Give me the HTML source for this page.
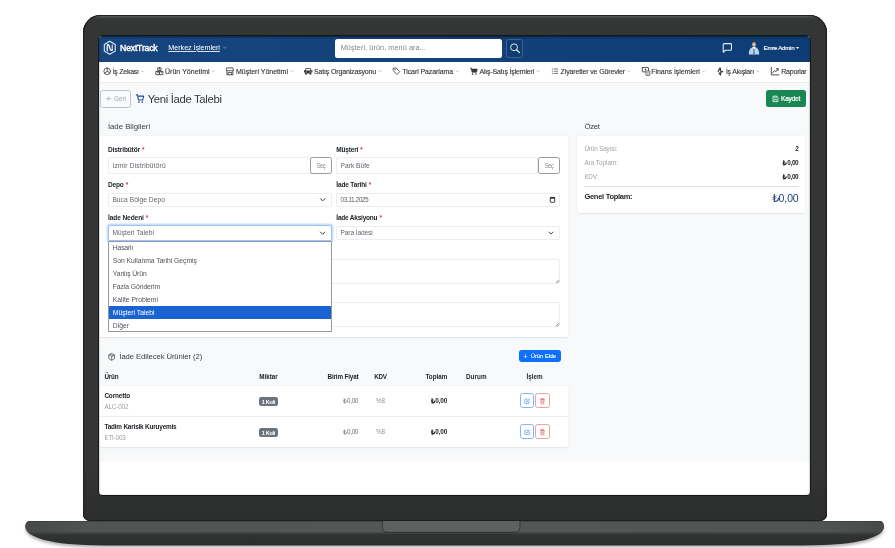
<!DOCTYPE html>
<html><head><meta charset="utf-8">
<style>
html,body{margin:0;padding:0}
body{width:895px;height:548px;position:relative;overflow:hidden;background:#fff;font-family:"Liberation Sans",sans-serif}
.a{position:absolute;box-sizing:border-box}
.t{position:absolute;white-space:pre;font-family:"Liberation Sans",sans-serif}
svg{position:absolute;overflow:visible}
</style></head><body>

<!-- laptop lid -->
<div class="a" id="lid" style="left:83px;top:15px;width:744px;height:506px;background:linear-gradient(#1c1d1d 0,#5c5e5d .9px,#4a4c4b 2px,#393b3a 3.5px,#343636 6px,#343636 90%,#2f3131 95%,#2c2e2e 100%);border-radius:17.5px 17.5px 7px 7px;box-shadow:inset 0 0 0 .9px #1f2020, inset 2.5px 0 1.5px -1px #2b2c2c, inset -2.5px 0 1.5px -1px #2b2c2c"></div>
<!-- base -->
<svg class="a" style="left:0;top:500px" width="895" height="48" viewBox="0 500 895 48">
<defs>
<linearGradient id="bg1" x1="0" y1="0" x2="0" y2="1"><stop offset="0" stop-color="#3c3e3d"/><stop offset="1" stop-color="#2b2c2c"/></linearGradient>
<linearGradient id="bg2" x1="0" y1="0" x2="1" y2="0"><stop offset="0" stop-color="#474948"/><stop offset=".08" stop-color="#525453"/><stop offset=".5" stop-color="#555756"/><stop offset=".92" stop-color="#525453"/><stop offset="1" stop-color="#474948"/></linearGradient>
<linearGradient id="sh" x1="0" y1="0" x2="0" y2="1"><stop offset="0" stop-color="#000" stop-opacity="0"/><stop offset="1" stop-color="#000" stop-opacity=".14"/></linearGradient>
<filter id="bl" x="-5%" y="-50%" width="110%" height="200%"><feGaussianBlur stdDeviation="1.4"/></filter>
<clipPath id="bc"><path id="bp" d="M25.4 526.5Q25.4 520.9 30 520.9H879.3Q883.9 520.9 883.9 526.5C883.5 537 861 545.4 804 545.4H105C48 545.4 25.8 537 25.4 526.5Z"/></clipPath>
</defs>
<path d="M25.4 526.5Q25.4 520.9 30 520.9H879.3Q883.9 520.9 883.9 526.5C883.5 537 861 545.4 804 545.4H105C48 545.4 25.8 537 25.4 526.5Z" transform="translate(0 2.2)" fill="#000" opacity=".3" filter="url(#bl)"/>
<path d="M25.4 526.5Q25.4 520.9 30 520.9H879.3Q883.9 520.9 883.9 526.5C883.5 537 861 545.4 804 545.4H105C48 545.4 25.8 537 25.4 526.5Z" fill="url(#bg1)"/>
<g clip-path="url(#bc)">
<rect x="20" y="520" width="870" height="12.6" fill="url(#bg2)"/>
<rect x="20" y="532.6" width="870" height="1.2" fill="#434544"/>
<rect x="20" y="520.4" width="870" height="1" fill="#2f3130"/>
<path d="M382.3 520.5H520V527.3Q520 532.3 515 532.3H387.3Q382.3 532.3 382.3 527.3Z" fill="#5f6160" stroke="#2f3131" stroke-width=".9"/>
</g>
</svg>
<!-- screen -->
<div class="a" id="screen" style="left:99px;top:36px;width:710.5px;height:458.5px;background:#fff;border-radius:3.5px;overflow:hidden;box-shadow:0 0 0 .9px #151616">
  <div class="a" style="left:1px;top:0;width:100%;height:425.7px;background:#f8f9fb"></div>
  <div class="a" style="left:0;top:26px;width:100%;height:20.3px;background:#fff;box-shadow:0 .5px 1px rgba(0,0,0,.05)"></div>
  <div class="a" style="left:0;top:0;width:100%;height:25.8px;background:linear-gradient(90deg,#17457d,#0e3c74);box-shadow:0 .4px 1px rgba(10,40,90,.18)"></div>
  <div class="a" style="left:0;top:0;width:100%;height:100%;border-radius:3.5px;box-shadow:inset 0 1.2px 1.8px rgba(0,0,0,.42), inset 0 0 1.2px rgba(0,0,0,.35)"></div>
</div>

<!-- header items -->
<div class="a" style="left:334.9px;top:38.7px;width:167.1px;height:18.9px;background:#fff;border-radius:2.5px"></div>
<div class="a" style="left:506.4px;top:38.7px;width:16.8px;height:18.9px;background:rgba(0,0,0,.06);border:.7px solid #3f6398;border-radius:2.5px"></div>
<!-- avatar -->



<!-- page head -->
<div class="a" style="left:100px;top:90.2px;width:31.4px;height:17.6px;border:.8px solid #c0c4c8;border-radius:2.6px;background:#f9fafb"></div>
<div class="a" style="left:766.4px;top:90.2px;width:40px;height:17.3px;background:#198754;border-radius:2.5px"></div>

<!-- card 1 -->
<div class="a" style="left:100px;top:136px;width:468px;height:201px;background:#fff;border-radius:0 0 2.5px 2.5px;box-shadow:0 .8px 1.5px rgba(0,0,0,.09)"></div>
<!-- inputs -->
<div class="a" style="left:107.8px;top:157.4px;width:203px;height:16.8px;border:.6px solid #ebedf0;border-radius:2px 0 0 2px;background:#fff"></div>
<div class="a" style="left:310.1px;top:157.4px;width:22.2px;height:16.8px;border:.8px solid #979ca1;border-radius:2.4px;background:#fff"></div>
<div class="a" style="left:336.1px;top:157.4px;width:202.4px;height:16.8px;border:.6px solid #ebedf0;border-radius:2px 0 0 2px;background:#fff"></div>
<div class="a" style="left:538px;top:157.4px;width:22.4px;height:16.8px;border:.8px solid #979ca1;border-radius:2.4px;background:#fff"></div>
<div class="a" style="left:107.8px;top:192.6px;width:224.4px;height:14.6px;border:.6px solid #ebedf0;border-radius:2px;background:#fff"></div>
<div class="a" style="left:336.1px;top:192.6px;width:224.3px;height:14.6px;border:.6px solid #ebedf0;border-radius:2px;background:#fff"></div>
<div class="a" style="left:336.1px;top:225.5px;width:224.3px;height:14.8px;border:.6px solid #ebedf0;border-radius:2px;background:#fff"></div>
<div class="a" style="left:108px;top:258.7px;width:452.4px;height:25.2px;border:.6px solid #ebedf0;border-radius:2px;background:#fff"></div>
<div class="a" style="left:108px;top:301.5px;width:452.4px;height:25.7px;border:.6px solid #ebedf0;border-radius:2px;background:#fff"></div>
<!-- focused select -->
<div class="a" style="left:107.8px;top:225.3px;width:224.6px;height:15.3px;border:.8px solid #9cc3fd;border-radius:2px;background:#fff;box-shadow:0 0 0 1.5px rgba(13,110,253,.22)"></div>
<!-- select chevrons -->
<!-- calendar icon -->
<!-- dropdown -->
<div class="a" style="left:108.4px;top:240.6px;width:223.8px;height:91.6px;background:#fff;border:.8px solid #969a9f"></div>
<div class="a" style="left:109.1px;top:306.1px;width:222.4px;height:12.5px;background:#1a63d3"></div>

<!-- card 2 -->
<div class="a" style="left:100px;top:385.5px;width:468px;height:61.6px;background:#fff;border-radius:0 0 2.5px 2.5px;box-shadow:0 .8px 1.5px rgba(0,0,0,.09)"></div>
<div class="a" style="left:100px;top:416.1px;width:468px;height:.6px;background:#eceef0"></div>
<div class="a" style="left:518.8px;top:350px;width:41.8px;height:12.4px;background:#0f70fb;border-radius:2.4px"></div>
<!-- badges -->
<div class="a" style="left:259px;top:397.4px;width:19.2px;height:9px;background:#6c757d;border-radius:2.2px"></div>
<div class="a" style="left:259px;top:428.3px;width:19.2px;height:9px;background:#6c757d;border-radius:2.2px"></div>
<!-- action buttons -->
<div class="a" style="left:519.7px;top:393.4px;width:14.4px;height:14.5px;border:.8px solid #86b4fb;border-radius:2.6px;background:#fff"></div>
<div class="a" style="left:535.3px;top:393.4px;width:14.4px;height:14.5px;border:.8px solid #eea0a8;border-radius:2.6px;background:#fff"></div>
<div class="a" style="left:519.7px;top:424.3px;width:14.4px;height:14.5px;border:.8px solid #86b4fb;border-radius:2.6px;background:#fff"></div>
<div class="a" style="left:535.3px;top:424.3px;width:14.4px;height:14.5px;border:.8px solid #eea0a8;border-radius:2.6px;background:#fff"></div>

<!-- ozet card -->
<div class="a" style="left:576.5px;top:135.8px;width:228.6px;height:77px;background:#fff;border-radius:0 0 2.5px 2.5px;box-shadow:0 .8px 1.5px rgba(0,0,0,.09)"></div>
<div class="a" style="left:584.2px;top:185.9px;width:214.6px;height:.6px;background:#dcdfe3"></div>

<!-- lira signs -->
<svg class="a" style="left:0;top:0" width="895" height="548" viewBox="0 0 895 548">
<g transform="translate(103.60 40.60) scale(0.5125 0.5143)"><path d="M12 1.4L22.6 7.5V20.5L12 26.6L1.4 20.5V7.5Z" fill="none" stroke="#e6eefb" stroke-width="2.1" stroke-linejoin="round"/><path d="M16.9 8.6V18.4" fill="none" stroke="#c3cad8" stroke-width="2.6" stroke-linecap="round"/><path d="M7.1 19.8V10.4C7.1 7.6 9.6 7.2 10.6 9.4L13.2 17.6C14 19.8 16.9 19.6 16.9 17.4" fill="none" stroke="#fff" stroke-width="2.5" stroke-linecap="round"/></g>
<g transform="translate(223.10 46.60) scale(0.5833 0.5833)" color="#9fb1cc"><path d="M0.7 0.7L3 3L5.3 0.7" fill="none" stroke="currentColor" stroke-width="1.0" stroke-linecap="round" stroke-linejoin="round"/></g>
<g transform="translate(509.80 43.00) scale(0.6562 0.6562)"><circle cx="6.5" cy="6.5" r="5.2" fill="none" stroke="#fff" stroke-width="1.35"/><path d="M10.4 10.4L14.8 14.8" stroke="#fff" stroke-width="1.7" stroke-linecap="round"/></g>
<g transform="translate(722.60 43.00) scale(0.6333 0.6250)"><path d="M2.4 1H12.6C13.4 1 14 1.6 14 2.4V10.2C14 11 13.4 11.6 12.6 11.6H4.6L1 14.8V2.4C1 1.6 1.6 1 2.4 1Z" fill="none" stroke="#e6edf7" stroke-width="1.7" stroke-linejoin="round"/></g>
<g transform="translate(748.30 41.00) scale(0.4957 0.4963)"><path d="M1 27C1 18 4 12.6 11.5 12.6C19 12.6 22 18 22 27Z" fill="#b9d3ee"/><path d="M8.3 12.9L11.5 16.5L14.7 12.9L13.6 11H9.4Z" fill="#f3f6fa"/><path d="M10.8 15.6H12.2L12.6 26H10.4Z" fill="#3a4654"/><ellipse cx="11.5" cy="6.4" rx="3.7" ry="4.6" fill="#e2b99a"/><path d="M7.7 5.4C7.6 1.6 9.6 0.6 11.6 0.6C13.8 0.6 15.5 1.8 15.3 5.4C14.6 3.6 13.4 3 11.5 3C9.6 3 8.4 3.6 7.7 5.4Z" fill="#5a4436"/></g>
<path d="M795.9 46.9H799.1L797.5 49Z" fill="#fff"/>
<g transform="translate(103.30 67.40) scale(0.4875 0.4875)"><circle cx="8" cy="8" r="6.8" fill="none" stroke="#33383d" stroke-width="1.65" stroke-linejoin="round" stroke-linecap="round"/><path d="M8 1.2V8L13.6 11.6M8 8L2.6 11.8" fill="none" stroke="#33383d" stroke-width="1.65" stroke-linejoin="round" stroke-linecap="round"/></g>
<g transform="translate(155.60 67.20) scale(0.4938 0.5125)"><path d="M5.2 1.2H10.8V6.4H5.2ZM1.2 8.2H7.4V14.6H1.2ZM8.6 8.2H14.8V14.6H8.6Z" fill="none" stroke="#33383d" stroke-width="1.65" stroke-linejoin="round" stroke-linecap="round"/><path d="M8 1.2V3.4M4.3 8.2V10.4M11.7 8.2V10.4" fill="none" stroke="#33383d" stroke-width="1.65" stroke-linejoin="round" stroke-linecap="round"/></g>
<g transform="translate(225.80 67.20) scale(0.5125 0.5125)"><path d="M2.2 1.4H13.8L15 5.4C15 7.2 12.8 7.4 12.3 5.8C11.8 7.4 9.4 7.4 9.1 5.8C8.7 7.4 6.4 7.4 6 5.8C5.6 7.4 3.2 7.4 2.8 5.8C2.4 7.4 1 7.2 1 5.4ZM2.2 7.4V14.8H13.8V7.4M4.6 14.6V10.2H11.4V14.6" fill="none" stroke="#33383d" stroke-width="1.65" stroke-linejoin="round" stroke-linecap="round"/></g>
<g transform="translate(304.00 67.40) scale(0.5250 0.5200)"><path d="M3.2 1.5H12.8L14.2 6.5V11.5H1.8V6.5Z" fill="#33383d"/><path d="M4.4 3H11.6L12.4 6.2H3.6Z" fill="#fff"/><rect x="0" y="5" width="2" height="5" rx=".8" fill="#33383d"/><rect x="14" y="5" width="2" height="5" rx=".8" fill="#33383d"/><rect x="2.2" y="11" width="3.2" height="3.2" rx=".8" fill="#33383d"/><rect x="10.6" y="11" width="3.2" height="3.2" rx=".8" fill="#33383d"/><circle cx="4.4" cy="8.8" r="1" fill="#fff"/><circle cx="11.6" cy="8.8" r="1" fill="#fff"/></g>
<g transform="translate(392.80 67.30) scale(0.4750 0.4875)"><path d="M1.6 1.6H7.4L14.6 8.8L8.8 14.6L1.6 7.4Z" fill="none" stroke="#33383d" stroke-width="1.65" stroke-linejoin="round" stroke-linecap="round"/><circle cx="4.8" cy="4.8" r="1.1" fill="#33383d"/></g>
<g transform="translate(469.80 67.20) scale(0.5000 0.5125)"><path d="M0.6 1.4H2.8L3.4 3.6H15L13.4 10H4.6L2.4 2.4" fill="#33383d" stroke="#33383d" stroke-width="1.2" stroke-linejoin="round"/><circle cx="5.4" cy="13.4" r="1.6" fill="#33383d"/><circle cx="12.2" cy="13.4" r="1.6" fill="#33383d"/></g>
<g transform="translate(551.60 68.00) scale(0.4857 0.4923)"><path d="M4.4 2H13.4M4.4 6.5H13.4M4.4 11H13.4" stroke="#33383d" stroke-width="1.4"/><path d="M0.6 2H2.6M0.6 6.5H2.6M0.6 11H2.6" stroke="#33383d" stroke-width="1.6"/></g>
<g transform="translate(641.80 67.00) scale(0.5059 0.5176)"><rect x="0.9" y="1" width="12.4" height="8.4" rx="1" fill="none" stroke="#33383d" stroke-width="1.65" stroke-linejoin="round" stroke-linecap="round"/><circle cx="7" cy="5.2" r="1.6" fill="#33383d"/><rect x="8.2" y="7.6" width="7.6" height="8.6" rx="1" fill="#fff" stroke="#33383d" stroke-width="1.5"/><path d="M10.6 11H13.4M10.6 13.4H13.4" stroke="#33383d" stroke-width="1.1"/></g>
<g transform="translate(717.50 67.10) scale(0.4833 0.5059)"><path d="M1.2 8.6L5.4 1.6L7.2 9.4L10.8 8.8M7.2 9.4L6 15.6L3.4 11.6" fill="none" stroke="#33383d" stroke-width="2.5" stroke-linejoin="round" stroke-linecap="round"/></g>
<g transform="translate(770.80 67.00) scale(0.5250 0.5250)"><path d="M1 0.8V15H15.4" fill="none" stroke="#33383d" stroke-width="1.65" stroke-linejoin="round" stroke-linecap="round"/><path d="M3.6 11L7 6.8L9.6 9L13.8 3.6M10.6 3.2H14V6.6" fill="none" stroke="#33383d" stroke-width="1.65" stroke-linejoin="round" stroke-linecap="round"/></g>
<g transform="translate(141.30 70.40) scale(0.4833 0.4833)" color="#8d9399"><path d="M0.7 0.7L3 3L5.3 0.7" fill="none" stroke="currentColor" stroke-width="1.1" stroke-linecap="round" stroke-linejoin="round"/></g>
<g transform="translate(211.90 70.40) scale(0.4833 0.4833)" color="#8d9399"><path d="M0.7 0.7L3 3L5.3 0.7" fill="none" stroke="currentColor" stroke-width="1.1" stroke-linecap="round" stroke-linejoin="round"/></g>
<g transform="translate(290.30 70.40) scale(0.4833 0.4833)" color="#8d9399"><path d="M0.7 0.7L3 3L5.3 0.7" fill="none" stroke="currentColor" stroke-width="1.1" stroke-linecap="round" stroke-linejoin="round"/></g>
<g transform="translate(378.50 70.40) scale(0.4833 0.4833)" color="#8d9399"><path d="M0.7 0.7L3 3L5.3 0.7" fill="none" stroke="currentColor" stroke-width="1.1" stroke-linecap="round" stroke-linejoin="round"/></g>
<g transform="translate(455.50 70.40) scale(0.4833 0.4833)" color="#8d9399"><path d="M0.7 0.7L3 3L5.3 0.7" fill="none" stroke="currentColor" stroke-width="1.1" stroke-linecap="round" stroke-linejoin="round"/></g>
<g transform="translate(536.60 70.40) scale(0.4833 0.4833)" color="#8d9399"><path d="M0.7 0.7L3 3L5.3 0.7" fill="none" stroke="currentColor" stroke-width="1.1" stroke-linecap="round" stroke-linejoin="round"/></g>
<g transform="translate(627.40 70.40) scale(0.4833 0.4833)" color="#8d9399"><path d="M0.7 0.7L3 3L5.3 0.7" fill="none" stroke="currentColor" stroke-width="1.1" stroke-linecap="round" stroke-linejoin="round"/></g>
<g transform="translate(702.10 70.40) scale(0.4833 0.4833)" color="#8d9399"><path d="M0.7 0.7L3 3L5.3 0.7" fill="none" stroke="currentColor" stroke-width="1.1" stroke-linecap="round" stroke-linejoin="round"/></g>
<g transform="translate(756.40 70.40) scale(0.4833 0.4833)" color="#8d9399"><path d="M0.7 0.7L3 3L5.3 0.7" fill="none" stroke="currentColor" stroke-width="1.1" stroke-linecap="round" stroke-linejoin="round"/></g>
<path d="M110.8 98.7H107.2M108.9 96.9L107.1 98.7L108.9 100.5" fill="none" stroke="#a3a8ad" stroke-width=".8" stroke-linecap="round" stroke-linejoin="round"/>
<g transform="translate(135.90 94.10) scale(0.5250 0.5750)"><path d="M0.7 1.3H2.8L5 10.3H13L14.8 3.6H3.4" fill="none" stroke="#1d4494" stroke-width="1.9" stroke-linejoin="round" stroke-linecap="round"/><circle cx="5.8" cy="13.8" r="1.5" fill="#1d4494"/><circle cx="12.2" cy="13.8" r="1.5" fill="#1d4494"/></g>
<g transform="translate(772.20 95.50) scale(0.4000 0.4250)"><path d="M2 1.5H11.5L14.5 4.5V14.5H2Z" fill="none" stroke="#fff" stroke-width="1.8" stroke-linejoin="round"/><path d="M4.8 1.8V5.6H10.6V1.8M4.8 14V9.5H11.4V14" fill="none" stroke="#fff" stroke-width="1.5"/></g>
<g transform="translate(555.60 279.60) scale(0.4500 0.4500)"><path d="M7.5 0.5L0.5 7.5M7.5 4L4 7.5" stroke="#555" stroke-width="1.3"/></g>
<g transform="translate(555.60 322.80) scale(0.4500 0.4500)"><path d="M7.5 0.5L0.5 7.5M7.5 4L4 7.5" stroke="#555" stroke-width="1.3"/></g>
<g transform="translate(319.80 198.00) scale(0.9500 0.9500)" color="#343a40"><path d="M0.7 0.7L3 3L5.3 0.7" fill="none" stroke="currentColor" stroke-width="1.05" stroke-linecap="round" stroke-linejoin="round"/></g>
<g transform="translate(319.80 231.40) scale(0.9500 0.9500)" color="#343a40"><path d="M0.7 0.7L3 3L5.3 0.7" fill="none" stroke="currentColor" stroke-width="1.05" stroke-linecap="round" stroke-linejoin="round"/></g>
<g transform="translate(548.20 231.40) scale(0.9000 0.9000)" color="#343a40"><path d="M0.7 0.7L3 3L5.3 0.7" fill="none" stroke="currentColor" stroke-width="1.05" stroke-linecap="round" stroke-linejoin="round"/></g>
<g transform="translate(549.80 196.50) scale(0.5400 0.5727)"><rect x="0.9" y="1.6" width="8.2" height="8.4" rx="1" fill="#fff" stroke="#222" stroke-width="1.6"/><rect x="0.9" y="1.2" width="8.2" height="2.6" fill="#222"/></g>
<g transform="translate(108.10 352.80) scale(0.4437 0.5000)"><path d="M8 1L14.5 4.2V11.8L8 15L1.5 11.8V4.2Z M1.5 4.2L8 7.6L14.5 4.2M8 7.6V15M4.6 2.7L11.3 6" fill="none" stroke="#444a50" stroke-width="1.5" stroke-linejoin="round"/></g>
<g transform="translate(524.20 398.10) scale(0.3750 0.3750)"><path d="M13.2 9V13.6C13.2 14.2 12.8 14.6 12.2 14.6H2.6C2 14.6 1.6 14.2 1.6 13.6V4C1.6 3.4 2 3 2.6 3H7.2" fill="none" stroke="#2f7bf5" stroke-width="1.5" stroke-linejoin="round" stroke-linecap="round"/><path d="M6.2 10.2L6.8 7.6L12.6 1.8L14.6 3.8L8.8 9.6Z" fill="none" stroke="#2f7bf5" stroke-width="1.4" stroke-linejoin="round"/></g>
<g transform="translate(540.10 398.00) scale(0.3917 0.4000)"><path d="M2 4.6H10L9.4 14.2C9.4 14.8 9 15.2 8.4 15.2H3.6C3 15.2 2.6 14.8 2.6 14.2Z" fill="none" stroke="#dc4050" stroke-width="1.4" stroke-linejoin="round"/><path d="M0.8 3.2H11.2M4.2 1H7.8" stroke="#dc4050" stroke-width="1.5" stroke-linecap="round"/><path d="M4.6 7.2V12.6M7.4 7.2V12.6" stroke="#dc4050" stroke-width="1"/></g>
<g transform="translate(524.20 429.00) scale(0.3750 0.3750)"><path d="M13.2 9V13.6C13.2 14.2 12.8 14.6 12.2 14.6H2.6C2 14.6 1.6 14.2 1.6 13.6V4C1.6 3.4 2 3 2.6 3H7.2" fill="none" stroke="#2f7bf5" stroke-width="1.5" stroke-linejoin="round" stroke-linecap="round"/><path d="M6.2 10.2L6.8 7.6L12.6 1.8L14.6 3.8L8.8 9.6Z" fill="none" stroke="#2f7bf5" stroke-width="1.4" stroke-linejoin="round"/></g>
<g transform="translate(540.10 428.90) scale(0.3917 0.4000)"><path d="M2 4.6H10L9.4 14.2C9.4 14.8 9 15.2 8.4 15.2H3.6C3 15.2 2.6 14.8 2.6 14.2Z" fill="none" stroke="#dc4050" stroke-width="1.4" stroke-linejoin="round"/><path d="M0.8 3.2H11.2M4.2 1H7.8" stroke="#dc4050" stroke-width="1.5" stroke-linecap="round"/><path d="M4.6 7.2V12.6M7.4 7.2V12.6" stroke="#dc4050" stroke-width="1"/></g>
<g transform="translate(342.80 398.35) scale(0.3563 0.3563)" color="#6c7278"><path d="M4.2 0V13C9.2 13 11.4 10 11.4 6.4" fill="none" stroke="currentColor" stroke-width="2.3"/><path d="M1 6.3L8 3.3M1 9.5L8 6.5" fill="none" stroke="currentColor" stroke-width="1.43"/></g>
<g transform="translate(430.60 398.35) scale(0.3563 0.3563)" color="#212529"><path d="M4.2 0V13C9.2 13 11.4 10 11.4 6.4" fill="none" stroke="currentColor" stroke-width="3.2"/><path d="M1 6.3L8 3.3M1 9.5L8 6.5" fill="none" stroke="currentColor" stroke-width="1.98"/></g>
<g transform="translate(342.80 429.45) scale(0.3563 0.3563)" color="#6c7278"><path d="M4.2 0V13C9.2 13 11.4 10 11.4 6.4" fill="none" stroke="currentColor" stroke-width="2.3"/><path d="M1 6.3L8 3.3M1 9.5L8 6.5" fill="none" stroke="currentColor" stroke-width="1.43"/></g>
<g transform="translate(430.60 429.45) scale(0.3563 0.3563)" color="#212529"><path d="M4.2 0V13C9.2 13 11.4 10 11.4 6.4" fill="none" stroke="currentColor" stroke-width="3.2"/><path d="M1 6.3L8 3.3M1 9.5L8 6.5" fill="none" stroke="currentColor" stroke-width="1.98"/></g>
<g transform="translate(782.20 160.34) scale(0.3563 0.3563)" color="#212529"><path d="M4.2 0V13C9.2 13 11.4 10 11.4 6.4" fill="none" stroke="currentColor" stroke-width="3.2"/><path d="M1 6.3L8 3.3M1 9.5L8 6.5" fill="none" stroke="currentColor" stroke-width="1.98"/></g>
<g transform="translate(782.20 174.34) scale(0.3563 0.3563)" color="#212529"><path d="M4.2 0V13C9.2 13 11.4 10 11.4 6.4" fill="none" stroke="currentColor" stroke-width="3.2"/><path d="M1 6.3L8 3.3M1 9.5L8 6.5" fill="none" stroke="currentColor" stroke-width="1.98"/></g>
<g transform="translate(771.90 193.97) scale(0.5756 0.5756)" color="#1f4478"><path d="M4.2 0V13C9.2 13 11.4 10 11.4 6.4" fill="none" stroke="currentColor" stroke-width="2.0"/><path d="M1 6.3L8 3.3M1 9.5L8 6.5" fill="none" stroke="currentColor" stroke-width="1.24"/></g>
</svg>

<div class="a" style="left:0;top:0;width:895px;height:548px;will-change:transform">
<span class="t" style="left:120.10px;top:44.00px;font-size:8.7px;line-height:8.7px;font-weight:400;color:#ffffff;letter-spacing:-0.208px;-webkit-text-stroke:.4px #fff;">NextTrack</span>
<span class="t" style="left:168.30px;top:44.00px;font-size:7.3px;line-height:7.3px;font-weight:400;color:#ffffff;letter-spacing:-0.095px;text-decoration:underline;text-underline-offset:.9px;text-decoration-thickness:.45px;text-decoration-color:rgba(255,255,255,.85);">Merkez İşlemleri</span>
<span class="t" style="left:340.70px;top:44.00px;font-size:7.3px;line-height:7.3px;font-weight:400;color:#80858b;letter-spacing:0.066px;">Müşteri, ürün, menü ara...</span>
<span class="t" style="left:763.60px;top:45.00px;font-size:6.1px;line-height:6.1px;font-weight:400;color:#ffffff;letter-spacing:-0.245px;-webkit-text-stroke:.15px #fff;">Emre Admin</span>
<span class="t" style="left:112.70px;top:68.00px;font-size:7.0px;line-height:7.0px;font-weight:400;color:#2b2f33;letter-spacing:-0.263px;-webkit-text-stroke:.1px #2b2f33;">İş Zekası</span>
<span class="t" style="left:165.00px;top:68.00px;font-size:7.0px;line-height:7.0px;font-weight:400;color:#2b2f33;letter-spacing:0.030px;-webkit-text-stroke:.1px #2b2f33;">Ürün Yönetimi</span>
<span class="t" style="left:236.00px;top:68.00px;font-size:7.0px;line-height:7.0px;font-weight:400;color:#2b2f33;letter-spacing:-0.001px;-webkit-text-stroke:.1px #2b2f33;">Müşteri Yönetimi</span>
<span class="t" style="left:314.00px;top:68.00px;font-size:7.0px;line-height:7.0px;font-weight:400;color:#2b2f33;letter-spacing:-0.155px;-webkit-text-stroke:.1px #2b2f33;">Satış Organizasyonu</span>
<span class="t" style="left:402.30px;top:68.00px;font-size:7.0px;line-height:7.0px;font-weight:400;color:#2b2f33;letter-spacing:-0.091px;-webkit-text-stroke:.1px #2b2f33;">Ticari Pazarlama</span>
<span class="t" style="left:479.40px;top:68.00px;font-size:7.0px;line-height:7.0px;font-weight:400;color:#2b2f33;letter-spacing:-0.162px;-webkit-text-stroke:.1px #2b2f33;">Alış-Satış İşlemleri</span>
<span class="t" style="left:560.60px;top:68.00px;font-size:7.0px;line-height:7.0px;font-weight:400;color:#2b2f33;letter-spacing:-0.133px;-webkit-text-stroke:.1px #2b2f33;">Ziyaretler ve Görevler</span>
<span class="t" style="left:651.20px;top:68.00px;font-size:7.0px;line-height:7.0px;font-weight:400;color:#2b2f33;letter-spacing:-0.028px;-webkit-text-stroke:.1px #2b2f33;">Finans İşlemleri</span>
<span class="t" style="left:725.90px;top:68.00px;font-size:7.0px;line-height:7.0px;font-weight:400;color:#2b2f33;letter-spacing:-0.214px;-webkit-text-stroke:.1px #2b2f33;">İş Akışları</span>
<span class="t" style="left:781.20px;top:68.00px;font-size:7.0px;line-height:7.0px;font-weight:400;color:#2b2f33;letter-spacing:-0.194px;-webkit-text-stroke:.1px #2b2f33;">Raporlar</span>
<span class="t" style="left:114.10px;top:96.00px;font-size:6.4px;line-height:6.4px;font-weight:400;color:#a3a8ad;letter-spacing:-0.093px;">Geri</span>
<span class="t" style="left:147.70px;top:94.00px;font-size:11.3px;line-height:11.3px;font-weight:400;color:#33383e;letter-spacing:-0.330px;">Yeni İade Talebi</span>
<span class="t" style="left:781.00px;top:96.00px;font-size:6.6px;line-height:6.6px;font-weight:400;color:#ffffff;letter-spacing:-0.246px;-webkit-text-stroke:.2px #fff;">Kaydet</span>
<span class="t" style="left:107.90px;top:123.00px;font-size:7.8px;line-height:7.8px;font-weight:400;color:#373c42;letter-spacing:-0.014px;">İade Bilgileri</span>
<span class="t" style="left:107.90px;top:147.00px;font-size:6.5px;line-height:6.5px;font-weight:700;color:#212529;letter-spacing:-0.103px;">Distribütör</span>
<span class="t" style="left:142.00px;top:147.00px;font-size:6.5px;line-height:6.5px;font-weight:700;color:#dc3545;letter-spacing:0.069px;">*</span>
<span class="t" style="left:336.30px;top:147.00px;font-size:6.5px;line-height:6.5px;font-weight:700;color:#212529;letter-spacing:-0.171px;">Müşteri</span>
<span class="t" style="left:360.30px;top:147.00px;font-size:6.5px;line-height:6.5px;font-weight:700;color:#dc3545;letter-spacing:0.069px;">*</span>
<span class="t" style="left:107.90px;top:182.00px;font-size:6.5px;line-height:6.5px;font-weight:700;color:#212529;letter-spacing:-0.117px;">Depo</span>
<span class="t" style="left:125.80px;top:182.00px;font-size:6.5px;line-height:6.5px;font-weight:700;color:#dc3545;letter-spacing:0.069px;">*</span>
<span class="t" style="left:336.30px;top:182.00px;font-size:6.5px;line-height:6.5px;font-weight:700;color:#212529;letter-spacing:-0.153px;">İade Tarihi</span>
<span class="t" style="left:368.70px;top:182.00px;font-size:6.5px;line-height:6.5px;font-weight:700;color:#dc3545;letter-spacing:0.069px;">*</span>
<span class="t" style="left:107.90px;top:215.00px;font-size:6.5px;line-height:6.5px;font-weight:700;color:#212529;letter-spacing:-0.048px;">İade Nedeni</span>
<span class="t" style="left:145.70px;top:215.00px;font-size:6.5px;line-height:6.5px;font-weight:700;color:#dc3545;letter-spacing:0.069px;">*</span>
<span class="t" style="left:336.30px;top:215.00px;font-size:6.5px;line-height:6.5px;font-weight:700;color:#212529;letter-spacing:-0.219px;">İade Aksiyonu</span>
<span class="t" style="left:379.40px;top:215.00px;font-size:6.5px;line-height:6.5px;font-weight:700;color:#dc3545;letter-spacing:0.069px;">*</span>
<span class="t" style="left:112.40px;top:163.00px;font-size:6.6px;line-height:6.6px;font-weight:400;color:#5f656b;letter-spacing:0.198px;">Izmir Distribütörü</span>
<span class="t" style="left:316.50px;top:163.00px;font-size:6.3px;line-height:6.3px;font-weight:400;color:#8f959a;letter-spacing:-0.680px;">Seç</span>
<span class="t" style="left:340.50px;top:163.00px;font-size:6.6px;line-height:6.6px;font-weight:400;color:#5f656b;letter-spacing:0.041px;">Park Büfe</span>
<span class="t" style="left:544.40px;top:163.00px;font-size:6.3px;line-height:6.3px;font-weight:400;color:#8f959a;letter-spacing:-0.680px;">Seç</span>
<span class="t" style="left:112.40px;top:197.00px;font-size:6.6px;line-height:6.6px;font-weight:400;color:#5f656b;letter-spacing:0.084px;">Buca Bölge Depo</span>
<span class="t" style="left:340.50px;top:197.00px;font-size:6.6px;line-height:6.6px;font-weight:400;color:#5f656b;letter-spacing:-0.480px;">03.11.2025</span>
<span class="t" style="left:112.40px;top:230.00px;font-size:6.6px;line-height:6.6px;font-weight:400;color:#5f656b;letter-spacing:0.072px;">Müşteri Talebi</span>
<span class="t" style="left:340.50px;top:230.00px;font-size:6.6px;line-height:6.6px;font-weight:400;color:#5f656b;letter-spacing:-0.116px;">Para İadesi</span>
<span class="t" style="left:112.80px;top:245.00px;font-size:6.8px;line-height:6.8px;font-weight:400;color:#4f555b;letter-spacing:-0.172px;">Hasarlı</span>
<span class="t" style="left:112.80px;top:258.00px;font-size:6.8px;line-height:6.8px;font-weight:400;color:#4f555b;letter-spacing:-0.046px;">Son Kullanma Tarihi Geçmiş</span>
<span class="t" style="left:112.80px;top:271.00px;font-size:6.8px;line-height:6.8px;font-weight:400;color:#4f555b;letter-spacing:-0.112px;">Yanlış Ürün</span>
<span class="t" style="left:112.80px;top:284.00px;font-size:6.8px;line-height:6.8px;font-weight:400;color:#4f555b;letter-spacing:-0.081px;">Fazla Gönderim</span>
<span class="t" style="left:112.80px;top:297.00px;font-size:6.8px;line-height:6.8px;font-weight:400;color:#4f555b;letter-spacing:-0.037px;">Kalite Problemi</span>
<span class="t" style="left:112.80px;top:310.00px;font-size:6.8px;line-height:6.8px;font-weight:400;color:#ffffff;letter-spacing:-0.009px;">Müşteri Talebi</span>
<span class="t" style="left:112.80px;top:323.00px;font-size:6.8px;line-height:6.8px;font-weight:400;color:#4f555b;letter-spacing:-0.012px;">Diğer</span>
<span class="t" style="left:119.40px;top:353.00px;font-size:7.7px;line-height:7.7px;font-weight:400;color:#373c42;letter-spacing:-0.089px;">İade Edilecek Ürünler (2)</span>
<span class="t" style="left:523.60px;top:353.00px;font-size:7px;line-height:7px;font-weight:400;color:#ffffff;letter-spacing:-0.494px;">+</span>
<span class="t" style="left:530.70px;top:353.00px;font-size:6px;line-height:6px;font-weight:400;color:#ffffff;letter-spacing:-0.118px;-webkit-text-stroke:.1px #fff;">Ürün Ekle</span>
<span class="t" style="left:104.40px;top:374.00px;font-size:6.3px;line-height:6.3px;font-weight:700;color:#212529;letter-spacing:-0.168px;">Ürün</span>
<span class="t" style="left:259.30px;top:374.00px;font-size:6.3px;line-height:6.3px;font-weight:700;color:#212529;letter-spacing:-0.009px;">Miktar</span>
<span class="t" style="left:327.50px;top:374.00px;font-size:6.3px;line-height:6.3px;font-weight:700;color:#212529;letter-spacing:-0.145px;">Birim Fiyat</span>
<span class="t" style="left:374.30px;top:374.00px;font-size:6.3px;line-height:6.3px;font-weight:700;color:#212529;letter-spacing:-0.298px;">KDV</span>
<span class="t" style="left:425.50px;top:374.00px;font-size:6.3px;line-height:6.3px;font-weight:700;color:#212529;letter-spacing:-0.027px;">Toplam</span>
<span class="t" style="left:466.00px;top:374.00px;font-size:6.3px;line-height:6.3px;font-weight:700;color:#212529;letter-spacing:0.051px;">Durum</span>
<span class="t" style="left:526.60px;top:374.00px;font-size:6.3px;line-height:6.3px;font-weight:700;color:#212529;letter-spacing:-0.027px;">İşlem</span>
<span class="t" style="left:104.40px;top:393.00px;font-size:6.4px;line-height:6.4px;font-weight:700;color:#212529;letter-spacing:-0.132px;">Cornetto</span>
<span class="t" style="left:104.40px;top:404.00px;font-size:6.3px;line-height:6.3px;font-weight:400;color:#9aa0a6;letter-spacing:-0.127px;">ALC-002</span>
<span class="t" style="left:104.40px;top:424.00px;font-size:6.4px;line-height:6.4px;font-weight:700;color:#212529;letter-spacing:-0.180px;">Tadim Karisik Kuruyemis</span>
<span class="t" style="left:104.40px;top:435.00px;font-size:6.3px;line-height:6.3px;font-weight:400;color:#9aa0a6;letter-spacing:-0.168px;">ETI-003</span>
<span class="t" style="left:261.80px;top:400.00px;font-size:5.6px;line-height:5.6px;font-weight:700;color:#ffffff;letter-spacing:-0.327px;">1 Koli</span>
<span class="t" style="left:261.80px;top:431.00px;font-size:5.6px;line-height:5.6px;font-weight:700;color:#ffffff;letter-spacing:-0.327px;">1 Koli</span>
<span class="t" style="left:347.10px;top:398.00px;font-size:6.4px;line-height:6.4px;font-weight:400;color:#6c7278;letter-spacing:-0.384px;">0,00</span>
<span class="t" style="left:376.10px;top:398.00px;font-size:6.3px;line-height:6.3px;font-weight:400;color:#8f959b;letter-spacing:-0.109px;">%8</span>
<span class="t" style="left:435.20px;top:398.00px;font-size:6.4px;line-height:6.4px;font-weight:700;color:#212529;letter-spacing:-0.118px;">0,00</span>
<span class="t" style="left:347.10px;top:429.00px;font-size:6.4px;line-height:6.4px;font-weight:400;color:#6c7278;letter-spacing:-0.384px;">0,00</span>
<span class="t" style="left:376.10px;top:429.00px;font-size:6.3px;line-height:6.3px;font-weight:400;color:#8f959b;letter-spacing:-0.109px;">%8</span>
<span class="t" style="left:435.20px;top:429.00px;font-size:6.4px;line-height:6.4px;font-weight:700;color:#212529;letter-spacing:-0.118px;">0,00</span>
<span class="t" style="left:584.40px;top:123.00px;font-size:7.8px;line-height:7.8px;font-weight:400;color:#373c42;letter-spacing:-0.323px;">Özet</span>
<span class="t" style="left:584.40px;top:146.00px;font-size:6.3px;line-height:6.3px;font-weight:400;color:#a0a5aa;letter-spacing:-0.132px;">Ürün Sayısı:</span>
<span class="t" style="left:584.40px;top:160.00px;font-size:6.3px;line-height:6.3px;font-weight:400;color:#a0a5aa;letter-spacing:0.002px;">Ara Toplam:</span>
<span class="t" style="left:584.40px;top:174.00px;font-size:6.3px;line-height:6.3px;font-weight:400;color:#a0a5aa;letter-spacing:-0.256px;">KDV:</span>
<span class="t" style="left:795.30px;top:146.00px;font-size:6.3px;line-height:6.3px;font-weight:700;color:#212529;letter-spacing:-0.116px;">2</span>
<span class="t" style="left:787.20px;top:160.00px;font-size:6.4px;line-height:6.4px;font-weight:700;color:#212529;letter-spacing:-0.318px;">0,00</span>
<span class="t" style="left:787.20px;top:174.00px;font-size:6.4px;line-height:6.4px;font-weight:700;color:#212529;letter-spacing:-0.318px;">0,00</span>
<span class="t" style="left:584.40px;top:193.00px;font-size:7.5px;line-height:7.5px;font-weight:700;color:#212529;letter-spacing:-0.279px;">Genel Toplam:</span>
<span class="t" style="left:778.60px;top:193.00px;font-size:10.5px;line-height:10.5px;font-weight:400;color:#1f4478;letter-spacing:-0.112px;">0,00</span>
</div>
</body></html>
